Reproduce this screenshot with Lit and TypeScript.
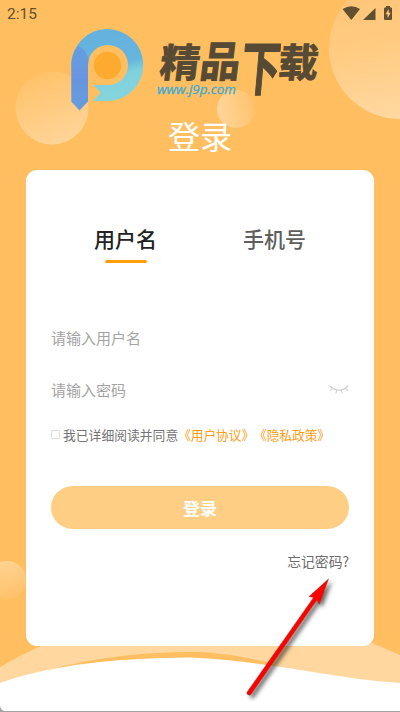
import { LitElement, html, css, svg } from "lit";
import { customElement, state } from "lit/decorators.js";
import { classMap } from "lit/directives/class-map.js";

const backdrop = svg`
  <defs>
    <linearGradient id="down" x1="0.3" y1="0" x2="0.7" y2="1">
      <stop offset="0" stop-color="#ffc064" /><stop offset="0.12" stop-color="#ffc46f" /><stop offset="1" stop-color="#ffd59a" />
    </linearGradient>
    <linearGradient id="big" x1="0.4" y1="0" x2="0.6" y2="1">
      <stop offset="0" stop-color="#ffc477" /><stop offset="0.5" stop-color="#ffcc83" /><stop offset="1" stop-color="#ffd9a3" />
    </linearGradient>
    <linearGradient id="side" x1="1" y1="0" x2="0" y2="0.2">
      <stop offset="0" stop-color="#ffc169" /><stop offset="1" stop-color="#ffd498" />
    </linearGradient>
    <linearGradient id="up" x1="0.3" y1="0" x2="0.6" y2="1">
      <stop offset="0" stop-color="#ffd393" /><stop offset="1" stop-color="#ffc169" />
    </linearGradient>
  </defs>
  <circle cx="52" cy="108" r="36.5" fill="url(#down)" />
  <circle cx="400" cy="48" r="71" fill="url(#big)" />
  <circle cx="236" cy="109" r="19" fill="url(#side)" />
  <circle cx="7" cy="580" r="19" fill="url(#up)" />
  <path d="M0 667Q20 655 41 646L372 643L400 655V712H0Z" fill="#ffd79f" />
  <path d="M40 672C90 659 130 652 200 652C230 654 250 658 274 664L260 680H40Z" fill="#ffbe60" />
  <path d="M0 683C50 665 115 658 190 657.5C270 661 330 678 400 683V712H0Z" fill="#fff" />
  <path d="M0 706V712H400V711H5Q1 711 0 706Z" fill="#a3a3a3" />
`;

@customElement("app-root")
export class AppRoot extends LitElement {
  @state() private tab = 0;

  static styles = css`
    :host { display: block; font-family: "Noto Sans CJK SC", sans-serif; }
    .page { position: relative; width: 400px; height: 712px; overflow: hidden; background: #ffbf61; }
    .backdrop, .arrow { position: absolute; inset: 0; pointer-events: none; }
    svg { display: block; }
    .content { position: relative; display: flex; flex-direction: column; height: 100%; }
    .status { display: flex; justify-content: space-between; height: 28px; padding: 0 7px; font: 400 15.5px/29px Roboto, sans-serif; color: #62502f; }
    .brand { margin-left: 68px; height: 87px; overflow: visible; }
    .mark-text { font-family: "Noto Sans CJK SC", sans-serif; font-weight: 700; fill: #574a34; stroke: #574a34; stroke-width: 0.9; }
    .site { font: italic 400 13px "Open Sans", sans-serif; fill: #41abd3; stroke: #41abd3; stroke-width: 0.3; }
    h1 { margin: 0; height: 55px; font-size: 32px; line-height: 41px; font-weight: 400; color: #fff; text-align: center; }
    .card { box-sizing: border-box; width: 348px; height: 476px; margin: 0 auto; padding: 51px 25px 0; border-radius: 11px; background: #fff; }
    .tabs { display: grid; grid-template-columns: 1fr 1fr; height: 90px; }
    .tab { display: flex; flex-direction: column; align-items: center; font-size: 21px; line-height: 35px; font-weight: 500; color: #5e5e5e; }
    .tab.on { color: #222; }
    .tab.on::after { content: ""; width: 42px; height: 3px; margin-top: 4px; border-radius: 2px; background: #ff9d0a; }
    .field { display: flex; align-items: center; justify-content: space-between; height: 52px; font-size: 15px; color: #a4a4a4; }
    .agree { display: flex; align-items: center; height: 38px; font-size: 12.8px; color: #747474; white-space: nowrap; text-spacing-trim: space-all; font-kerning: none; }
    .box { box-sizing: border-box; width: 9px; height: 9px; margin-right: 3px; border: 1px solid #dedede; border-radius: 1px; }
    .agree b { font-weight: 400; color: #ff9e13; letter-spacing: -0.15px; }
    .login { display: flex; align-items: center; justify-content: center; height: 43px; margin-top: 33px; border-radius: 22px; background: #ffce85; color: #fff; font-size: 17px; font-weight: 700; }
    .forgot { margin-top: 22px; text-align: right; font-size: 13.8px; line-height: 20px; color: #6c6c6c; }
  `;

  render() {
    return html`<div class="page">
      <svg class="backdrop" width="400" height="712">${backdrop}</svg>
      <div class="content">
        <div class="status">
          <span>2:15</span>
          <svg width="52" height="28" viewBox="341 0 52 28" fill="#62502f">
            <path d="M342.5 9Q351.5 3.5 360 9L351.3 20Z" />
            <path d="M363 20L375.5 8V20Z" />
            <path fill-rule="evenodd" d="M385 7.5H386V6H390V7.5H391Q392 7.5 392 8.5V19Q392 20 391 20H385Q384 20 384 19V8.5Q384 7.5 385 7.5ZM388.7 9L385.5 14.3H387.6V18.2L390.7 12.8H388.7Z" />
          </svg>
        </div>
        <svg class="brand" width="260" height="87" viewBox="68 28 260 87">
          <defs>
            <linearGradient id="ring" x1="0" y1="0" x2="0.25" y2="1">
              <stop offset="0" stop-color="#64b0df" /><stop offset="0.6" stop-color="#66b5de" /><stop offset="0.76" stop-color="#80d1dd" /><stop offset="1" stop-color="#84d4dd" />
            </linearGradient>
            <linearGradient id="stem" x1="0" y1="0" x2="0" y2="1">
              <stop offset="0" stop-color="#649fdf" /><stop offset="0.5" stop-color="#6795df" /><stop offset="1" stop-color="#669ddd" />
            </linearGradient>
          </defs>
          <path d="M71.3 65A36 36 0 1 1 108 101H93L101 92.5L93 85H108A20 20 0 1 0 88 65Z" fill="url(#ring)" />
          <path d="M71.3 65Q71.5 54 77.5 46Q86 48 88.5 59L88 65V101.5L79.5 110.5L71.3 101.5Z" fill="url(#stem)" />
          <circle cx="107.5" cy="65.5" r="13.7" fill="#fdab2e" />
          <g class="mark-text" font-size="40">
            <text transform="translate(158.5 76.8) skewX(-7) scale(1 .98)">精</text>
            <text transform="translate(198.5 77) skewX(-7) scale(1.01 1.06)">品</text>
            <text transform="translate(239.5 89.5) skewX(-5) scale(.98 1.48)">下</text>
            <text transform="translate(277 76.8) skewX(-6) scale(1 .98)">载</text>
          </g>
          <text class="site" x="157" y="94" textLength="79" lengthAdjust="spacingAndGlyphs">www.j9p.com</text>
        </svg>
        <h1>登录</h1>
        <div class="card">
          <div class="tabs">
            ${["用户名", "手机号"].map((t, i) => html`<div class=${classMap({ tab: true, on: i === this.tab })} @click=${() => (this.tab = i)}>${t}</div>`)}
          </div>
          <div class="field">请输入用户名</div>
          <div class="field">请输入密码
            <svg width="20" height="12" viewBox="0 0 20 12" fill="none" stroke="#cfcfcf" stroke-width="1.1" stroke-linecap="round">
              <path d="M1 3Q10 11.5 19 3M3.3 5.3L1.5 7.5M7.7 7.4L7 9.9M12.3 7.4L13 9.9M16.7 5.3L18.5 7.5" />
            </svg>
          </div>
          <div class="agree"><span class="box"></span>我已详细阅读并同意<b>《用户协议》《隐私政策》</b></div>
          <div class="login">登录</div>
          <div class="forgot">忘记密码?</div>
        </div>
      </div>
      <svg class="arrow" width="400" height="712">
        <defs><filter id="shade" x="-20%" y="-20%" width="150%" height="150%"><feDropShadow dx="3" dy="3" stdDeviation="2" flood-color="#000" flood-opacity="0.6" /></filter></defs>
        <path filter="url(#shade)" d="M328.5 579L309 596.6L313.6 597.4L247 692.2Q246.6 695.2 249.6 695.2L251 694.3L317 599.8L319.3 604Z" fill="#ff0505" stroke="#8d1710" stroke-width="0.4" />
      </svg>
    </div>`;
  }
}
